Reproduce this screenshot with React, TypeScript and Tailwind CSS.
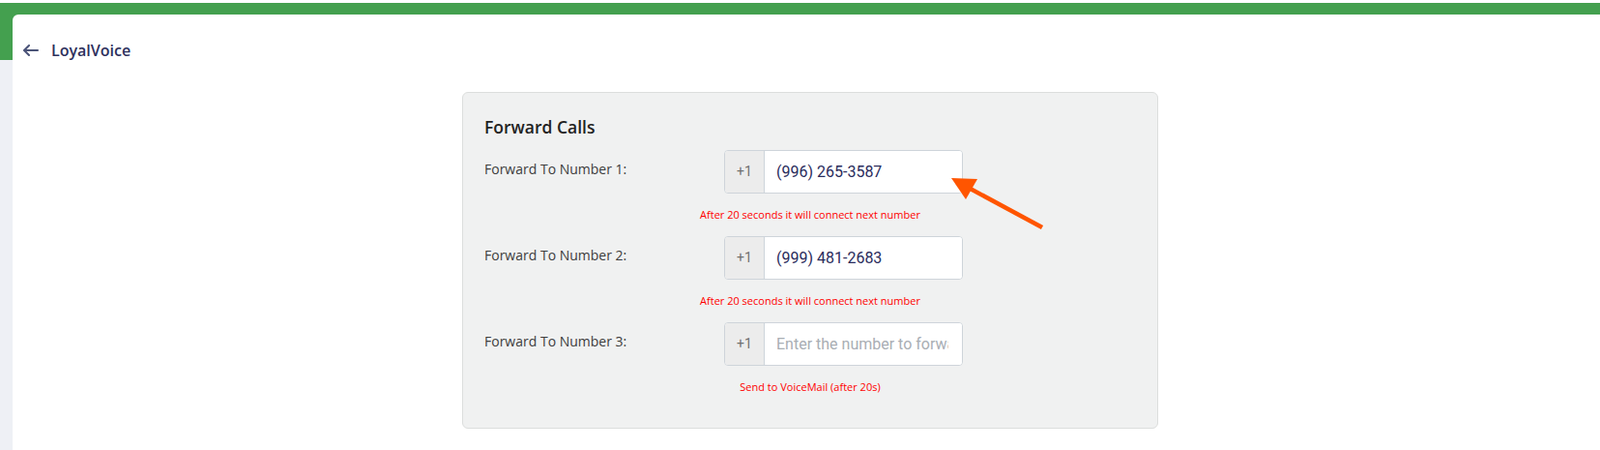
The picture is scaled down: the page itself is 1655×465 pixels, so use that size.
import React from "react";

const rows = [
  { label: "Forward To Number 1:", value: "(996) 265-3587", note: "After 20 seconds it will connect next number" },
  { label: "Forward To Number 2:", value: "(999) 481-2683", note: "After 20 seconds it will connect next number" },
  { label: "Forward To Number 3:", value: "", note: "Send to VoiceMail (after 20s)" },
];

function ForwardRow({ label, value, note }: { label: string; value: string; note: string }) {
  return (
    <div className="mb-[15px]">
      <div className="flex">
        <div className="w-[248px] pt-[10px] text-[14px] leading-[20px] text-[#3d3d3d]">{label}</div>
        <div className="flex h-[45px] w-[247px] overflow-hidden rounded-[4px] border border-[#ced4da] bg-white">
          <div className="flex w-[41px] items-center justify-center border-r border-[#ced4da] bg-[#ececec] font-['Roboto',sans-serif] text-[14px] text-[#707070]">
            +1
          </div>
          <input
            readOnly
            value={value}
            placeholder="Enter the number to forward calls"
            className="min-w-0 flex-1 bg-white pl-[12px] pr-[14px] font-['Roboto',sans-serif] text-[16px] text-[#2a2c5c] outline-none placeholder:text-[#a9aeb4]"
          />
        </div>
      </div>
      <div className="mt-[15px] text-center text-[11px] leading-[14px] text-[#ff0000]">{note}</div>
    </div>
  );
}

export default function App() {
  return (
    <div className="relative h-[465px] w-[1655px] overflow-hidden bg-white pt-[3px] font-['Open_Sans',sans-serif]">
      <div className="flex h-[462px]">
        {/* left rail */}
        <div className="flex w-[13px] flex-col">
          <div className="h-[59px] bg-[#44a04f]" />
          <div className="flex-1 bg-[#eef0f5]" />
        </div>

        <div className="flex flex-1 flex-col bg-[#44a04f] pt-[12px]">
          <div className="flex-1 rounded-tl-[6px] bg-white">
            {/* Header */}
            <div className="mt-[27px] flex h-[20px] items-center pl-[11px]">
              <svg width="16" height="12" viewBox="0 0 16 12" fill="none" stroke="#4b5478" strokeWidth="2" strokeLinecap="round" strokeLinejoin="round">
                <path d="M15 6H1.5" />
                <path d="M6 1 1 6l5 5" />
              </svg>
              <span className="ml-[13px] text-[16px] font-semibold text-[#2e305c]">LoyalVoice</span>
            </div>

            {/* Card */}
            <div className="ml-[465px] mt-[33px] h-[348px] w-[720px] rounded-[6px] border border-[#dcdedd] bg-[#f0f1f1] pl-[22px] pr-[22px] pt-[23px]">
              <h2 className="text-[17.5px] font-semibold leading-[24px] text-[#222]">Forward Calls</h2>
              <div className="mt-[12px]">
                {rows.map((r) => (
                  <ForwardRow key={r.label} {...r} />
                ))}
              </div>
            </div>
          </div>
        </div>
      </div>

      {/* annotation arrow */}
      <svg className="pointer-events-none absolute left-0 top-0" width="1655" height="465">
        <line x1="1078" y1="235" x2="1000" y2="193" stroke="#ff5500" strokeWidth="4.5" strokeLinecap="butt" />
        <polygon points="984,184 1011,185 999,206" fill="#ff5500" />
      </svg>
    </div>
  );
}
